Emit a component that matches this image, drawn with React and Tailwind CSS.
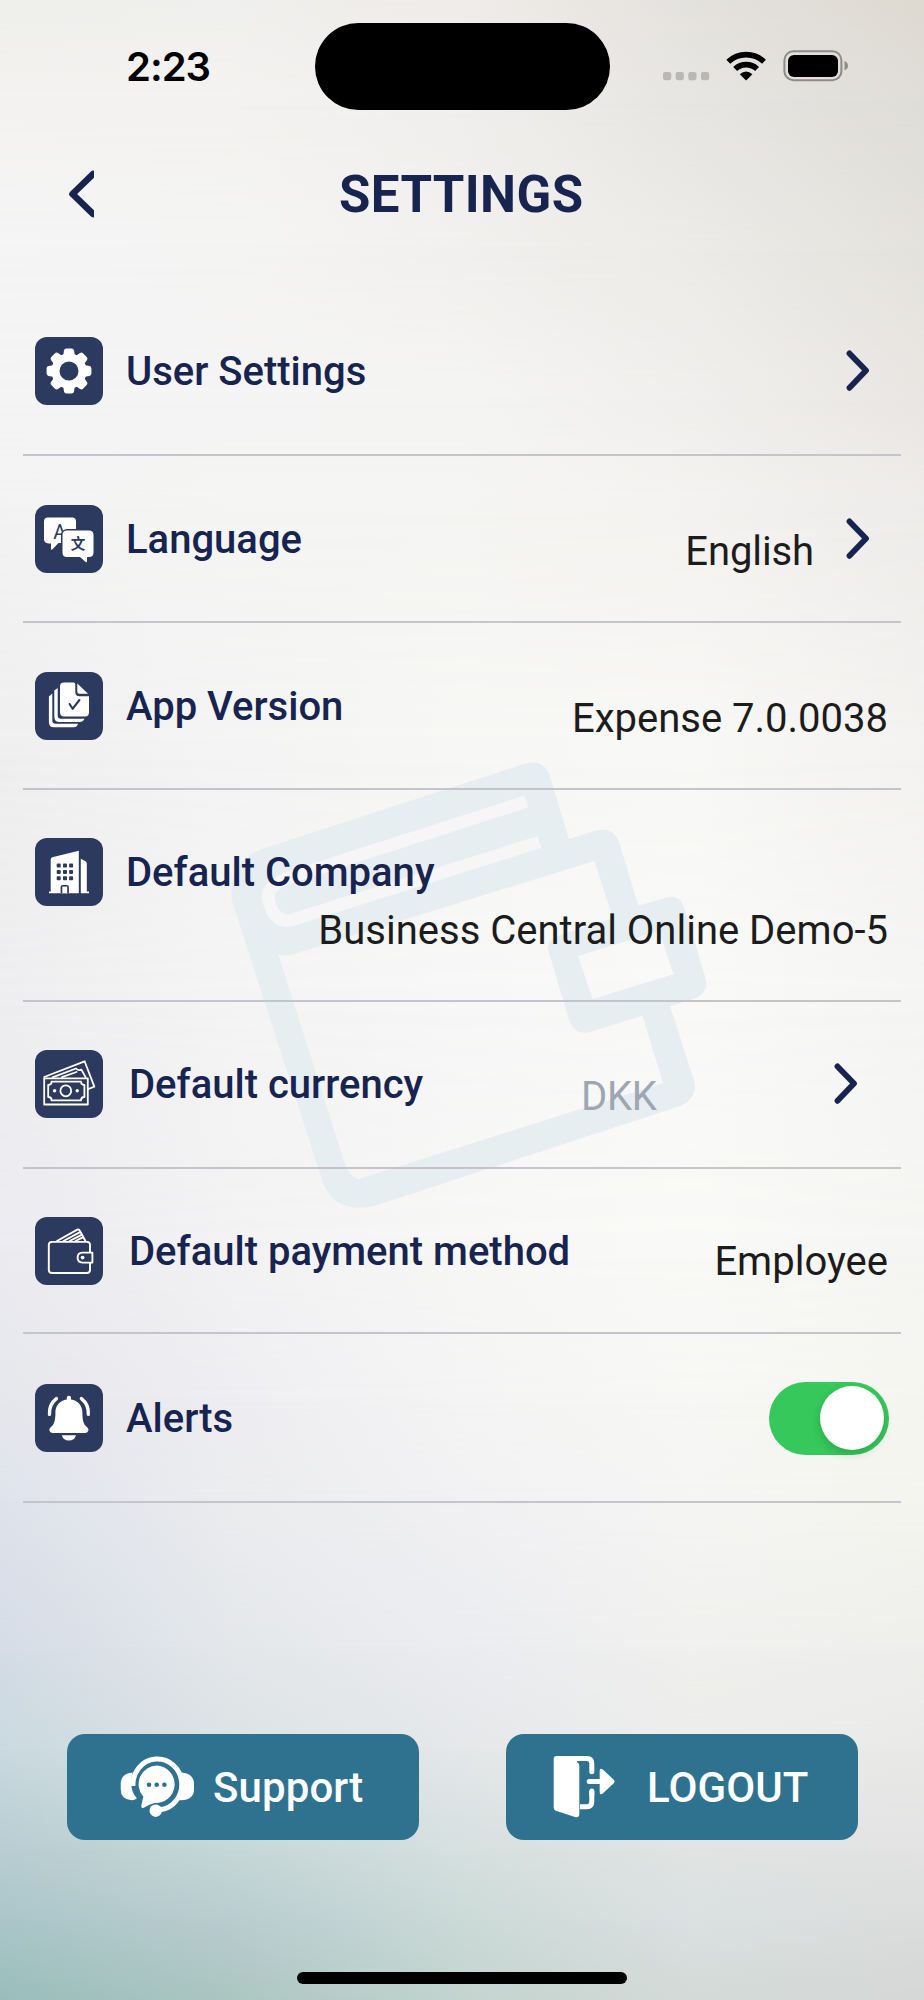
import React from "react";

const meshRows = [0, 100, 250, 400, 500, 750, 1000, 1250, 1400, 1500, 1650, 1750, 1850, 1920, 2000];
const meshColors = [
  ["#efefec", "#f0f0ee", "#f0ece9", "#e4e2de", "#dedad1"],
  ["#f3f2f0", "#f3f2f0", "#f0efed", "#e7e5e2", "#dfddd8"],
  ["#f5f5f6", "#f4f4f3", "#f2f0ee", "#ecebe8", "#e4e2dd"],
  ["#f4f4f4", "#f5f4f4", "#f4f4f3", "#f0efed", "#e9e6e3"],
  ["#f3f3f3", "#f5f5f4", "#f5f5f3", "#f4f2f0", "#eeecea"],
  ["#efefef", "#f4f4f4", "#f7f7f5", "#f8f8f6", "#f3f2f0"],
  ["#eeeef0", "#f4f4f4", "#f7f7f7", "#f9f9f8", "#f5f5f4"],
  ["#ebebf0", "#f2f2f3", "#f7f7f6", "#f9f9f7", "#f5f5f3"],
  ["#e6e7eb", "#eeedf1", "#f4f4f4", "#f7f8f5", "#f5f5f0"],
  ["#dfe3ec", "#ebecee", "#f1f1f3", "#f5f5f4", "#f4f5ee"],
  ["#d4dce6", "#e4e7ea", "#ebecf0", "#f0f0ee", "#eeeeec"],
  ["#c9d9df", "#dce2e4", "#e5e7e9", "#ececeb", "#e9e9e8"],
  ["#b8cdd2", "#c5d7d6", "#d5e0df", "#e1e4e3", "#e2e3e2"],
  ["#aac6c9", "#b9cccf", "#cbdad7", "#dbe0e1", "#dbdddc"],
  ["#9abdbb", "#aac6c0", "#c3d4cf", "#d3dad7", "#d5d7d6"],
];

/* Soft colour mesh: each layer fades in between two neighbouring rows. */
function Backdrop() {
  return (
    <div className="absolute inset-0 overflow-hidden" aria-hidden="true">
      {meshColors.map((colors, i) => {
        const mask =
          i === 0
            ? "none"
            : `linear-gradient(to bottom, transparent ${meshRows[i - 1]}px, black ${meshRows[i]}px)`;
        return (
          <div
            key={i}
            className="absolute inset-0"
            style={{
              backgroundImage: `linear-gradient(to right, ${colors.join(", ")})`,
              maskImage: mask,
            }}
          />
        );
      })}
      <svg className="absolute inset-0" width="924" height="2000" viewBox="0 0 924 2000">
        <path
          fill="#e6eef1"
          fillRule="evenodd"
          d="M262 849 L524 764 Q543 758 549.5 775 L569 839 L596 830.5 Q613 826 619.4 843 L638.4 905.7 L665 898 Q679 893 684.5 908 L706 980 Q708 993 695 998.5 L670 1006.3 L694.5 1082 Q697 1099 680 1106 L376 1205.5 Q336 1215 323 1183 L231.7 900 Q228 862 262 849 Z
             M594.3 861 L613 918 L560 935 Q546 939 548.5 951 L568.5 1018 Q574 1035 588 1032.5 L642.5 1015.7 L663 1083 L358.4 1179.3 Q349 1176 344.6 1163 L278.5 955 Q286 957 297 953 Z
             M578 956 L659 931 L673.5 974.3 L592.6 999 Z"
        />
        <path
          d="M526.5 801.5 L288 878 Q264 887 269 902 Q275 924 292 920 L539.5 842"
          fill="none"
          stroke="#f6f6f6"
          strokeWidth="12.5"
        />
      </svg>
    </div>
  );
}

function Tile({ children }) {
  return (
    <svg width="68" height="68" viewBox="0 0 68 68" className="shrink-0">
      <rect width="68" height="68" rx="12" fill="#2d3a60" />
      {children}
    </svg>
  );
}

function GearTile() {
  return (
    <Tile>
      <g fill="#fff">
        {[0, 45, 90, 135, 180, 225, 270, 315].map((a) => (
          <path key={a} d="M28 20 L29 13.5 Q29.4 11.6 31.4 11.6 H36.6 Q38.6 11.6 39 13.5 L40 20 Z" transform={`rotate(${a} 34 34)`} />
        ))}
        <circle cx="34" cy="34" r="17.6" />
      </g>
      <circle cx="34" cy="34" r="9.5" fill="#2d3a60" />
    </Tile>
  );
}

function LanguageTile() {
  return (
    <Tile>
      <path d="M13 12.5 H37 Q41 12.5 41 16.5 V34 Q41 38 37 38 H23.5 L17.3 44.4 Q16 45.2 16 43.6 V38.5 H13.5 Q9 38 9 34 V16.5 Q9 12.5 13 12.5 Z" fill="#fff" />
      <text x="18.2" y="33.8" fontSize="20" fontFamily="Roboto, sans-serif" fontWeight="400" fill="#2d3a60">A</text>
      <rect x="26" y="24" width="34" height="29.5" rx="6" fill="#2d3a60" />
      <path d="M32 25.5 H54 Q58.5 25.5 58.5 30 V47.5 Q58.5 52 54 52 H52 V56 Q52 58 50.3 56.8 L45 52 H32 Q27.5 52 27.5 47.5 V30 Q27.500 25.500 32 25.500 Z" fill="#fff" />
      <text x="35.8" y="44.4" fontSize="14.5" fontFamily="'Noto Sans CJK SC', sans-serif" fontWeight="700" fill="#2d3a60">文</text>
    </Tile>
  );
}

function VersionTile() {
  return (
    <Tile>
      <path d="M29 10.6 H38.5 Q40.3 10.6 40.3 12.4 V20 Q40.3 24.2 44.5 24.2 H54 V40.3 Q54 44.5 50 44.5 H29.3 Q25 44.5 25 40.3 V14.6 Q25 10.6 29 10.6 Z" fill="#fff" />
      <path d="M42.3 11.5 L53 21.8 H44.3 Q42.3 21.8 42.3 20 Z" fill="#fff" />
      <path d="M34.6 32 L37.6 36.8 L44.4 28" fill="none" stroke="#2d3a60" strokeWidth="2.1" strokeLinecap="round" strokeLinejoin="round" />
      <path d="M19.3 18.5 L22.7 16 V43.5 Q22.7 46.8 26 46.8 H49.5 Q48 50 44.5 50 H24.5 Q19.3 50 19.3 44.8 Z" fill="#fff" />
      <path d="M13.9 24.5 L17.3 21.5 V48.5 Q17.3 51.8 20.6 51.8 H43 Q42 55.3 38.5 55.3 H18.5 Q13.9 55.3 13.9 50 Z" fill="#fff" />
    </Tile>
  );
}

function CompanyTile() {
  return (
    <Tile>
      <path d="M15.7 53.4 V21.5 Q15.7 19.6 17.3 19.2 L43.8 12.8 V55.3 H14 V53.4 Z" fill="#fff" />
      <path d="M45.8 20.8 L50.5 23.2 Q51.8 24 51.8 25.5 V53.4 H54 V55.3 H45.8 Z" fill="#fff" />
      <g fill="#2d3a60">
        {[25.6, 31.9, 38.2].map((y) =>
          [21.7, 28, 34.1].map((x) => <rect key={`${x}-${y}`} x={x} y={y} width="4" height="4" rx="0.8" />)
        )}
        <path d="M25.6 55.3 V49 Q25.6 47 27.6 47 H31.9 Q33.9 47 33.9 49 V55.3 Z" />
      </g>
      <path d="M27.3 55.3 V48.6 H32.2 V55.3 Z" fill="#fff" />
    </Tile>
  );
}

function CurrencyTile() {
  return (
    <Tile>
      <g fill="none" stroke="#fff" strokeWidth="1.8" strokeLinejoin="round" strokeLinecap="round">
        <rect x="9.2" y="28.3" width="43.6" height="26.2" />
        <path d="M16.6 31.6 H46 Q46 35 49.4 35 V47 Q46 47 46 50.4 H16.6 Q16.6 47 13.2 47 V35 Q16.6 35 16.6 31.6 Z" />
        <ellipse cx="30.8" cy="40.8" rx="5.4" ry="5.5" />
        <path d="M9.2 27 L49.6 11.3 L59.3 36.6 L53.4 39" />
        <path d="M17.5 27.4 L41 18.5 Q43.4 21 46.4 19.6 L50.5 27 M27 27.2 L41.5 22" />
      </g>
      <circle cx="19.6" cy="40.8" r="1.7" fill="#fff" />
      <circle cx="42.2" cy="40.8" r="1.7" fill="#fff" />
    </Tile>
  );
}

function PaymentTile() {
  return (
    <Tile>
      <g fill="none" stroke="#fff" strokeWidth="1.9" strokeLinejoin="round" strokeLinecap="round">
        <path d="M55 35 V28 Q55 24.9 52 24.9 H17 Q13.8 24.9 13.8 28 V52.8 Q13.8 56 17 56 H52 Q55 56 55 52.8 V46" />
        <path d="M57.4 35.6 H47.4 Q42.6 35.8 42.6 40.5 Q42.6 45.4 47.4 45.6 H57.4 Z" />
        <path d="M22 24 L42.3 12.7 Q44 12 44.8 13.6 L50.4 24" />
        <path d="M28.5 24 L44.6 15.4 M34.6 24 L46.6 17.8 M40.5 24 L47.8 20.4" />
      </g>
      <circle cx="47.6" cy="40.6" r="1.9" fill="#fff" />
    </Tile>
  );
}

function AlertsTile() {
  return (
    <Tile>
      <path d="M31.8 15.4 V13.6 Q31.8 11.7 33.9 11.7 Q36 11.7 36 13.6 V15.4 C43 16.4 47.4 21.6 47.4 28.4 C47.4 36 48.2 40 52.4 43.6 Q53.8 45 53.4 46.6 Q52.8 49 50.4 49 H17.4 Q15 49 14.4 46.6 Q14 45 15.4 43.6 C19.6 40 20.4 36 20.4 28.4 C20.4 21.6 24.8 16.4 31.8 15.4 Z" fill="#fff" />
      <path d="M26.8 51.2 H41 Q39.4 56.6 33.9 56.6 Q28.4 56.6 26.8 51.2 Z" fill="#fff" />
      <g fill="none" stroke="#fff" strokeWidth="3.4" strokeLinecap="round">
        <path d="M14.5 30.3 Q13.9 20.4 21.4 14.6" />
        <path d="M53.3 30.3 Q53.9 20.4 46.4 14.6" />
      </g>
    </Tile>
  );
}

function Chevron() {
  return (
    <svg width="24" height="42" viewBox="0 0 24 42" className="shrink-0">
      <path d="M3.5 3.4 L20 20.6 L3.5 37.8" fill="none" stroke="#182450" strokeWidth="5.8" strokeLinecap="round" strokeLinejoin="round" />
    </svg>
  );
}

function Row({ className, icon, label, labelClass = "ml-[23px]", children }) {
  return (
    <div className={`mx-[23px] border-b-2 border-[#c4c5ca] ${className}`}>
      <div className="ml-3 flex h-[68px] items-center">
        {icon}
        <span className={`mt-[2px] text-[40px] leading-none font-medium whitespace-nowrap text-[#182450] ${labelClass}`}>{label}</span>
        {children}
      </div>
    </div>
  );
}

const valueClass = "ml-auto whitespace-nowrap text-[40px] leading-none text-[#1c1c1c]";

function StatusBar() {
  return (
    <div className="flex h-[132px] pt-[23px]">
      <div className="w-[315px] pt-[24px] pl-[126px] font-['Inter'] text-[40px] leading-10 font-semibold tracking-[-1px] text-black">
        2:23
      </div>
      <div className="h-[87px] w-[295px] rounded-full bg-black" />
      <svg width="240" height="87" viewBox="610 23 240 87">
        <g fill="#b9b8b5">
          <rect x="663" y="72" width="8.2" height="8.2" rx="2.2" />
          <rect x="675.7" y="72" width="8.2" height="8.2" rx="2.2" />
          <rect x="688.3" y="72" width="8.2" height="8.2" rx="2.2" />
          <rect x="701" y="72" width="8.2" height="8.2" rx="2.2" />
        </g>
        <g fill="none" stroke="#000" strokeWidth="5.6">
          <path d="M728.3 61.7 A26 26 0 0 1 764 61.7" />
          <path d="M735.2 69 A16 16 0 0 1 757.1 69" />
        </g>
        <path d="M739.8 74.3 Q746.1 68.6 752.4 74.3 L746.1 80.6 Z" fill="#000" />
        <rect x="784.4" y="51.2" width="57" height="29" rx="9" fill="none" stroke="#8d8c89" strokeWidth="2" />
        <rect x="788" y="55" width="50" height="22" rx="6" fill="#000" />
        <path d="M844.5 61 Q848 62.5 848 65.7 Q848 68.9 844.5 70.2 Z" fill="#8d8c89" />
      </svg>
    </div>
  );
}

function SupportIcon() {
  return (
    <svg width="75" height="64" viewBox="0 0 75 64" className="shrink-0">
      <path d="M12.5 17.5 Q11 24 11.2 29 Q11.6 38 16.8 43.2 Q15 45.3 11.5 45.3 Q0.7 44.5 0.7 34 V29 Q0.7 18.5 12.5 17.5 Z" fill="#fff" />
      <path d="M61.5 17.5 Q74 18.5 74 29 V34 Q74 45 61 45.3 Q58.5 45 58 44.5 L61.8 32 Z" fill="#fff" />
      <path d="M13 31 A24.4 25.5 0 1 1 40.5 54.8" fill="none" stroke="#fff" strokeWidth="5" />
      <circle cx="35.7" cy="55.7" r="6.2" fill="#fff" />
      <path d="M37.3 10.6 A18.7 18.7 0 1 1 34.5 48 Q29.5 49 23.8 52.7 Q20.8 53.7 21.3 50.5 L23.3 41.7 A18.7 18.7 0 0 1 37.3 10.6 Z" fill="#fff" />
      <g fill="#2f7290">
        <circle cx="29" cy="29.7" r="2.3" />
        <circle cx="36.7" cy="29.7" r="2.3" />
        <circle cx="44.4" cy="29.7" r="2.3" />
      </g>
    </svg>
  );
}

function LogoutIcon() {
  return (
    <svg width="64" height="64" viewBox="0 0 64 64" className="shrink-0">
      <path d="M3.5 1 H24 V7 Q26.3 8 26.3 11 V59 Q26.3 63 22 62 L3.5 56 Q0.7 55 0.7 52.5 V3.8 Q0.7 1 3.5 1 Z" fill="#fff" />
      <g fill="none" stroke="#fff" strokeWidth="5" strokeLinecap="round">
        <path d="M21 3.5 H34 Q38.8 3.5 38.8 8.5 V16.7" />
        <path d="M38.8 36 V46.5 Q38.8 51.8 34 51.8 H27" strokeLinecap="butt" />
        <path d="M38.8 36 V40" />
        <path d="M36.2 26.4 H50" />
      </g>
      <path d="M46.7 16 Q46.7 12.5 49.8 14.5 L60.5 24.4 Q62.5 26.4 60.5 28.4 L49.8 38.6 Q46.7 40.5 46.7 37 Z" fill="#fff" />
    </svg>
  );
}

export default function App() {
  return (
    <div className="relative h-[2000px] w-[924px] overflow-hidden font-['Roboto',sans-serif]">
      <Backdrop />
      <div className="relative flex h-full flex-col">
        <StatusBar />

        <header className="flex h-[124px] items-center">
          <svg width="28" height="50" viewBox="0 0 28 50" className="ml-[66px]">
            <path d="M27 5 L6.5 25 L27 45" fill="none" stroke="#182450" strokeWidth="6.6" strokeLinecap="round" strokeLinejoin="round" />
          </svg>
          <h1 className="ml-[245px] text-[51px] leading-none font-bold tracking-[0.4px] text-[#182450]">SETTINGS</h1>
        </header>

        <main>
          <Row className="h-[200px] pt-[81px]" icon={<GearTile />} label="User Settings">
            <div className="mr-[31px] ml-auto flex"><Chevron /></div>
          </Row>
          <Row className="h-[167px] pt-[49px]" icon={<LanguageTile />} label="Language">
            <span className={`${valueClass} mt-[25px] tracking-[-0.1px]`}>English</span>
            <div className="mr-[31px] ml-8 flex"><Chevron /></div>
          </Row>
          <Row className="h-[167px] pt-[49px]" icon={<VersionTile />} label="App Version">
            <span className={`${valueClass} mt-[26px] mr-[13px]`}>Expense 7.0.0038</span>
          </Row>
          <div className="mx-[23px] h-[212px] border-b-2 border-[#c4c5ca] pt-[48px]">
            <div className="ml-3 flex h-[68px] items-center">
              <CompanyTile />
              <span className="mt-[2px] ml-[23px] text-[40px] leading-none font-medium text-[#182450]">Default Company</span>
            </div>
            <div className="mt-[5px] mr-[13px] flex">
              <span className={valueClass}>Business Central Online Demo-5</span>
            </div>
          </div>
          <Row className="h-[167px] pt-[48px]" icon={<CurrencyTile />} label="Default currency" labelClass="ml-[26px] w-[452px]">
            <span className="mt-[26px] text-[40px] leading-none tracking-[-0.3px] text-[#9ea5b3]">DKK</span>
            <div className="mr-[43px] ml-auto flex"><Chevron /></div>
          </Row>
          <Row className="h-[165px] pt-[48px]" icon={<PaymentTile />} label="Default payment method" labelClass="ml-[26px]">
            <span className={`${valueClass} mt-[21px] mr-[13px]`}>Employee</span>
          </Row>
          <Row className="h-[169px] pt-[50px]" icon={<AlertsTile />} label="Alerts">
            <div className="mr-[12px] ml-auto flex h-[73px] w-[120px] items-center justify-end rounded-full bg-[#36c85b] pr-[5px]">
              <div className="size-16 rounded-full bg-white shadow-[0_4px_10px_rgba(0,0,0,0.16)]" />
            </div>
          </Row>
        </main>

        <div className="mt-[231px] flex gap-[87px] pl-[67px]">
          <button className="flex h-[106px] w-[352px] items-center rounded-[18px] bg-[#2f7290] pl-[53px]">
            <SupportIcon />
            <span className="mt-[2px] ml-[18px] text-[42px] leading-none font-medium tracking-[0.1px] text-white">Support</span>
          </button>
          <button className="flex h-[106px] w-[352px] items-center rounded-[18px] bg-[#2f7290] pl-[47px]">
            <LogoutIcon />
            <span className="mt-[2px] ml-[30px] text-[42px] leading-none font-medium tracking-[0.1px] text-white">LOGOUT</span>
          </button>
        </div>

        <div className="mt-auto mb-4 ml-[297px] h-3 w-[330px] rounded-full bg-black" />
      </div>
    </div>
  );
}
